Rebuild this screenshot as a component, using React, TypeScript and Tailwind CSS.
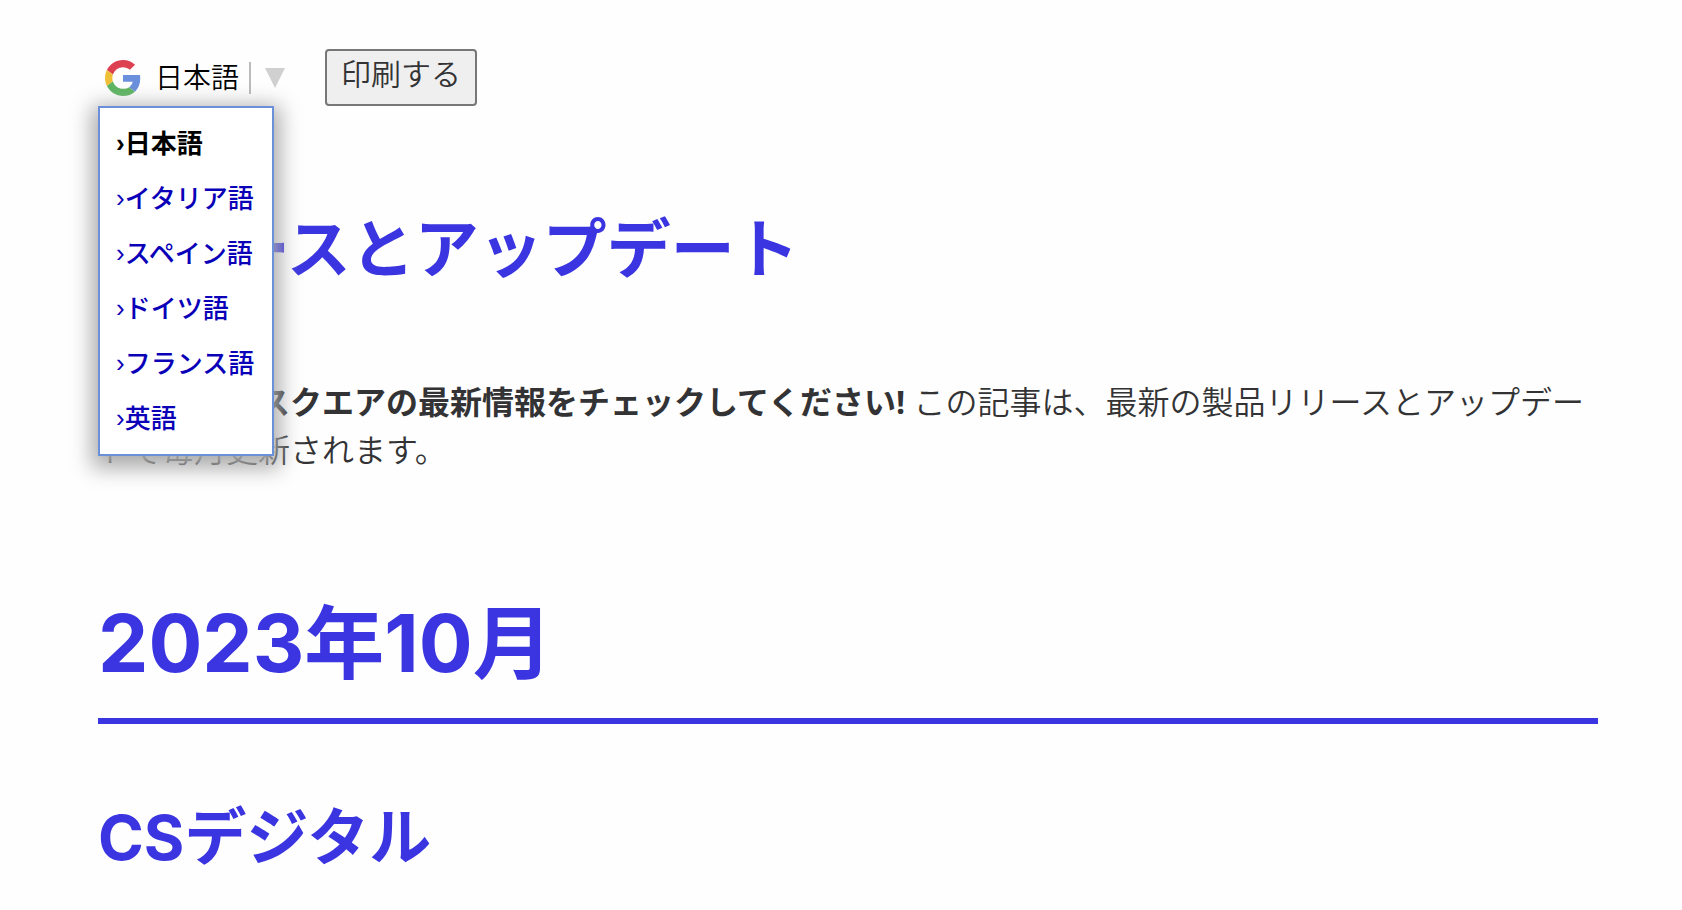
import { useState } from "react";

const languages = ["日本語", "イタリア語", "スペイン語", "ドイツ語", "フランス語", "英語"];

function GoogleLogo() {
  return (
    <svg viewBox="0 0 48 48" className="size-9 shrink-0" aria-hidden="true">
      <path fill="#dd4050" d="M24 9.5c3.54 0 6.71 1.22 9.21 3.6l6.85-6.85C35.9 2.38 30.47 0 24 0 14.62 0 6.51 5.38 2.56 13.22l7.98 6.19C12.43 13.72 17.74 9.5 24 9.5z" />
      <path fill="#6a8fdc" d="M46.98 24.55c0-1.57-.15-3.09-.38-4.55H24v9.02h12.94c-.58 2.96-2.26 5.48-4.78 7.18l7.73 6c4.51-4.18 7.09-10.36 7.09-17.65z" />
      <path fill="#f0bf38" d="M10.53 28.59c-.48-1.45-.76-2.99-.76-4.59s.27-3.14.76-4.59l-7.98-6.19C.92 16.46 0 20.12 0 24c0 3.88.92 7.54 2.56 10.78l7.97-6.19z" />
      <path fill="#5cb560" d="M24 48c6.48 0 11.93-2.13 15.89-5.81l-7.73-6c-2.15 1.45-4.92 2.3-8.16 2.3-6.26 0-11.57-4.22-13.47-9.91l-7.98 6.19C6.51 42.62 14.62 48 24 48z" />
    </svg>
  );
}

export default function App() {
  const [open, setOpen] = useState(true);
  const [current, setCurrent] = useState("日本語");

  return (
    <main className="min-h-screen bg-[#fefefe] px-6 pt-[49px] pb-4 font-['Inter','Noto_Sans_CJK_JP',sans-serif] text-[#333335] md:pr-[84px] md:pl-[98px]">
      <div className="flex h-[57px] items-stretch gap-10">
        <div className="relative flex">
          <button
            type="button"
            aria-expanded={open}
            onClick={() => setOpen(!open)}
            className="flex items-center pl-[7px] text-[28px] leading-8 text-black"
          >
            <GoogleLogo />
            <span className="ml-3.5 font-[350]">{current}</span>
            <span className="ml-2.5 h-8 w-0.5 bg-[#bbbbbb]" />
            <svg viewBox="0 0 20 20" className="ml-3.5 size-5" aria-hidden="true">
              <path d="M0 0h20L10 20z" fill="#d0d0d0" />
            </svg>
          </button>
          {open && (
            <ul className="absolute top-full left-0 z-10 border-2 border-[#6b90da] bg-white py-2 pr-[18px] pl-4 shadow-[0_6px_20px_6px_#aaaaaa]">
              {languages.map((name) => (
                <li key={name}>
                  <a
                    href="#"
                    onClick={(event) => {
                      event.preventDefault();
                      setCurrent(name);
                    }}
                    className={
                      name === current
                        ? "flex h-[55px] items-center text-[26px] font-bold whitespace-nowrap text-black"
                        : "flex h-[55px] items-center text-[26px] font-medium whitespace-nowrap text-[#0a00b8]"
                    }
                  >
                    <span className="font-['Liberation_Sans',sans-serif]">›</span>
                    {name}
                  </a>
                </li>
              ))}
            </ul>
          )}
        </div>
        <button
          type="button"
          className="rounded border-2 border-[#777777] bg-[#f0eff0] px-3.5 pb-2 text-[30px] leading-8 font-[350]"
        >
          印刷する
        </button>
      </div>

      <h1 className="mt-[95px] text-[64px] leading-24 font-bold text-[#3a35e0]">リリースとアップデート</h1>
      <p className="mt-[81px] font-['Open_Sans','Noto_Sans_CJK_JP',sans-serif] text-[32px] leading-12 font-[350]">
        <strong className="font-bold">コンテントスクエアの最新情報をチェックしてください!</strong>{" "}
        この記事は、最新の製品リリースとアップデートで毎月更新されます。
      </p>
      <h2 className="mt-[109px] border-b-6 border-[#3a35e0] pb-[15px] text-[80px] leading-[120px] font-bold text-[#3a35e0]">
        2023年10月
      </h2>
      <h3 className="mt-[66px] text-[62px] leading-24 font-bold text-[#3a35e0]">CSデジタル</h3>
    </main>
  );
}
